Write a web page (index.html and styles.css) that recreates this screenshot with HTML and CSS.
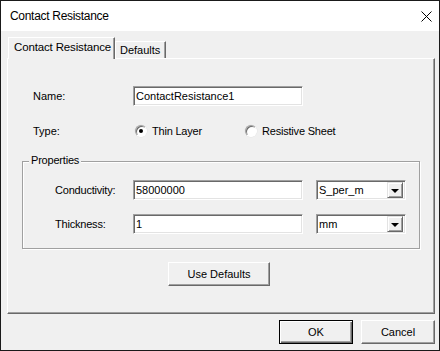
FILE: index.html
```html
<!DOCTYPE html>
<html lang="en">
<head>
    <meta charset="UTF-8">
    <title>Contact Resistance</title>
    <link rel="stylesheet" href="styles.css">
</head>
<body>
    <div class="window">
        <div class="titlebar">
            <span class="title">Contact Resistance</span>
            <svg class="close" width="11" height="11" viewBox="0 0 11 11">
                <path d="M0.5 0.5 L10.5 10.5 M10.5 0.5 L0.5 10.5" stroke="#000" stroke-width="1" fill="none"/>
            </svg>
        </div>
        <div class="client">
            <div class="tabs">
                <div class="tab active">Contact Resistance</div>
                <div class="tab">Defaults</div>
            </div>
            <div class="panel">
                <div class="row">
                    <span class="label">Name:</span>
                    <div class="field wide">ContactResistance1</div>
                </div>
                <div class="row type-row">
                    <span class="label">Type:</span>
                    <span class="option first"><span class="radio checked"></span>Thin Layer</span>
                    <span class="option"><span class="radio"></span>Resistive Sheet</span>
                </div>

                <div class="group">
                    <span class="legend">Properties</span>
                    <div class="group-row">
                        <span class="glabel">Conductivity:</span>
                        <div class="field wide">58000000</div>
                        <div class="combo"><span class="combo-text">S_per_m</span><span class="drop"></span></div>
                    </div>
                    <div class="group-row">
                        <span class="glabel">Thickness:</span>
                        <div class="field wide">1</div>
                        <div class="combo"><span class="combo-text">mm</span><span class="drop"></span></div>
                    </div>
                </div>

                <div class="defaults-row">
                    <button class="btn use-defaults">Use Defaults</button>
                </div>
            </div>
            <div class="footer">
                <button class="btn default">OK</button>
                <button class="btn">Cancel</button>
            </div>
        </div>
    </div>
</body>
</html>
```

FILE: styles.css
```css
* {
    box-sizing: border-box;
}
body {
    margin: 0;
    font-family: "Liberation Sans", Arial, sans-serif;
    font-size: 11px;
    color: #000;
    background: #fff;
}
.window {
    width: 440px;
    height: 351px;
    border: 1px solid #1a1a1a;
    display: flex;
    flex-direction: column;
}
.titlebar {
    height: 30px;
    background: #fff;
    display: flex;
    align-items: center;
    padding-left: 9px;
    padding-right: 7px;
}
.title {
    font-size: 12px;
    letter-spacing: -0.3px;
    flex: 1;
}
.close {
    display: block;
}
.client {
    flex: 1;
    background: #f0f0f0;
    padding: 0 4px 0 6px;
}

/* tabs */
.tabs {
    height: 27px;
    display: flex;
    align-items: flex-end;
    padding-left: 1px;
}
.tab {
    height: 17px;
    padding: 0 5px 0 4px;
    border-top: 1px solid #fff;
    border-left: 1px solid #fff;
    border-right: 1px solid #696969;
    box-shadow: inset -1px 0 #a0a0a0;
    background: #f0f0f0;
    line-height: 16px;
    position: relative;
    white-space: nowrap;
}
.tab.active {
    height: 22px;
    width: 107px;
    padding-left: 5px;
    padding-right: 0;
    line-height: 19px;
    margin-bottom: -1px;
    z-index: 1;
    letter-spacing: -0.15px;
    font-size: 11.5px;
}

/* panel */
.panel {
    height: 256px;
    border-top: 1px solid #fff;
    border-left: 1px solid #fff;
    border-right: 1px solid #696969;
    border-bottom: 1px solid #696969;
    box-shadow: inset -1px -1px #a0a0a0;
    padding-top: 27px;
}
.row {
    display: flex;
    align-items: center;
    height: 20px;
    margin-left: 25px;
}
.label {
    width: 100px;
}
.type-row {
    margin-top: 15px;
}
.option {
    display: flex;
    align-items: center;
    width: 112px;
    letter-spacing: -0.2px;
}
.option.first {
    padding-left: 2px;
}
.radio {
    width: 12px;
    height: 12px;
    border-radius: 50%;
    background: #fff;
    border: 1px solid;
    border-color: #a0a0a0 #fff #fff #a0a0a0;
    box-shadow: inset 1px 1px #696969, 0 0 0 0.5px #e3e3e3;
    margin-right: 5px;
    display: flex;
    align-items: center;
    justify-content: center;
}
.radio.checked::after {
    content: "";
    width: 4px;
    height: 4px;
    border-radius: 50%;
    background: #000;
}

/* sunken fields */
.field, .combo {
    height: 20px;
    background: #fff;
    border: 1px solid;
    border-color: #a0a0a0 #fff #fff #a0a0a0;
    box-shadow: inset 1px 1px #696969, inset -1px -1px #e3e3e3;
    padding-left: 2px;
    line-height: 18px;
    white-space: nowrap;
}
.wide {
    width: 170px;
}

/* group box */
.group {
    position: relative;
    margin: 20px 0 0 14px;
    width: 398px;
    height: 88px;
    border: 1px solid #a0a0a0;
    box-shadow: inset 1px 1px #fff, 1px 1px #fff;
    padding: 18px 0 0 32px;
}
.legend {
    position: absolute;
    top: -8px;
    left: 6px;
    padding: 0 2px;
    background: #f0f0f0;
    letter-spacing: -0.2px;
}
.group-row {
    display: flex;
    align-items: center;
    height: 20px;
    margin-bottom: 14px;
}
.glabel {
    width: 78px;
    letter-spacing: -0.2px;
}
.combo {
    width: 90px;
    margin-left: 13px;
    display: flex;
    align-items: center;
    padding: 2px;
}
.combo-text {
    flex: 1;
    line-height: 16px;
}
.drop {
    width: 16px;
    height: 16px;
    background: #f0f0f0;
    border-top: 1px solid #e3e3e3;
    border-left: 1px solid #e3e3e3;
    border-right: 1px solid #696969;
    border-bottom: 1px solid #696969;
    box-shadow: inset 1px 1px #fff, inset -1px -1px #a0a0a0;
    display: flex;
    align-items: center;
    justify-content: center;
}
.drop::after {
    content: "";
    border-left: 4px solid transparent;
    border-right: 4px solid transparent;
    border-top: 4px solid #000;
    margin-top: 1px;
}

/* buttons */
.btn {
    font-family: "Liberation Sans", Arial, sans-serif;
    font-size: 11px;
    color: #000;
    background: #f0f0f0;
    height: 24px;
    width: 74px;
    padding: 0;
    border: 1px solid;
    border-color: #fff #696969 #696969 #fff;
    box-shadow: inset -1px -1px #a0a0a0;
}
.btn.default {
    border-color: #000;
    box-shadow: inset 1px 1px #fff, inset -1px -1px #696969, inset -2px -2px #a0a0a0;
}
.defaults-row {
    margin: 13px 0 0 160px;
}
.use-defaults {
    width: 102px;
}
.footer {
    display: flex;
    justify-content: flex-end;
    gap: 8px;
    margin-top: 6px;
}
```
